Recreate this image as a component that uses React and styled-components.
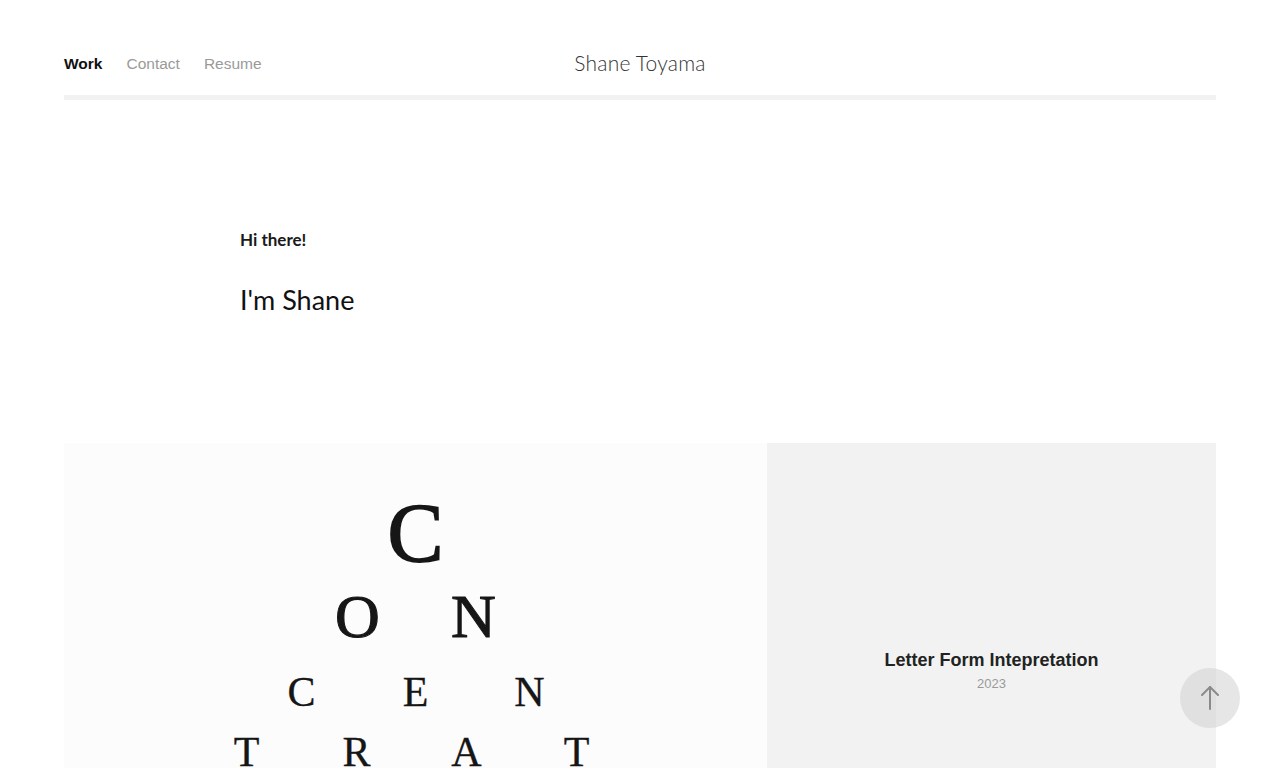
import React from 'react';
import styled, { createGlobalStyle } from 'styled-components';

const GlobalStyle = createGlobalStyle`
  html, body {
    margin: 0;
    padding: 0;
    background: #ffffff;
    overflow: hidden;
  }
  * { box-sizing: border-box; }
`;

const Page = styled.div`
  padding: 0 64px;
  font-family: "Liberation Sans", Arial, sans-serif;
`;

const Header = styled.header`
  padding-top: 49px;
  border-bottom: 5px solid #f2f2f2;
  padding-bottom: 20px;
`;

const HeaderRow = styled.div`
  display: grid;
  grid-template-columns: 1fr auto 1fr;
  align-items: center;
  height: 26px;
`;

const Nav = styled.nav`
  display: flex;
  gap: 24px;
  padding-top: 3px;
`;

const NavLink = styled.a`
  font-size: 15.5px;
  text-decoration: none;
  color: ${(p) => (p.active ? '#111111' : '#9a9a9a')};
  font-weight: ${(p) => (p.active ? 700 : 400)};
`;

const SiteTitle = styled.div`
  font-family: Lato, "Open Sans", sans-serif;
  font-weight: 300;
  font-size: 21px;
  color: #333333;
  letter-spacing: 0.2px;
`;

const Intro = styled.section`
  padding: 129px 0 0 176px;
  height: 343px;
  font-family: Lato, "Open Sans", sans-serif;
`;

const Greeting = styled.p`
  margin: 0;
  font-size: 17px;
  font-weight: 700;
  color: #1a1a1a;
`;

const Name = styled.h1`
  margin: 33px 0 0;
  font-size: 27px;
  font-weight: 400;
  color: #111111;
`;

const Grid = styled.div`
  display: grid;
  grid-template-columns: 703px 1fr;
  height: 454px;
`;

const ImageCard = styled.div`
  background: #fcfcfc;
  display: flex;
  flex-direction: column;
  align-items: center;
  padding-top: 52px;
  font-family: "Liberation Serif", "Times New Roman", serif;
  color: #161616;
`;

const ChartRow = styled.div`
  display: flex;
  justify-content: center;
  height: ${(p) => p.h}px;
  font-size: ${(p) => p.size}px;
  line-height: ${(p) => p.h}px;
  -webkit-text-stroke: ${(p) => p.stroke}px #161616;
  transform: translateX(${(p) => p.shift || 0}px);
`;

const ChartLetter = styled.span`
  width: ${(p) => p.w}px;
  text-align: center;
`;

const InfoCard = styled.div`
  background: #f2f2f2;
  display: flex;
  flex-direction: column;
  align-items: center;
  justify-content: center;
`;

const CardTitle = styled.h3`
  margin: 0;
  font-size: 18px;
  font-weight: 700;
  color: #222222;
`;

const CardYear = styled.div`
  margin-top: 5px;
  font-size: 13px;
  color: #9a9a9a;
`;

const TopButton = styled.button`
  position: fixed;
  left: 1180px;
  top: 668px;
  width: 60px;
  height: 60px;
  border-radius: 50%;
  border: none;
  background: rgba(210, 210, 210, 0.55);
  display: flex;
  align-items: center;
  justify-content: center;
  padding: 0;
`;

const rows = [
  { size: 84, h: 77, w: 116, stroke: 1.6, letters: ['C'] },
  { size: 62, h: 88, w: 116, stroke: 1.1, letters: ['O', 'N'] },
  { size: 42, h: 64, w: 114, stroke: 0.3, letters: ['C', 'E', 'N'] },
  { size: 42, h: 56, w: 110, stroke: 0.3, shift: -4, letters: ['T', 'R', 'A', 'T'] },
];

const App = () => {
  return (
    <Page>
      <GlobalStyle />
      <Header>
        <HeaderRow>
          <Nav>
            <NavLink href="#" active>Work</NavLink>
            <NavLink href="#">Contact</NavLink>
            <NavLink href="#">Resume</NavLink>
          </Nav>
          <SiteTitle>Shane Toyama</SiteTitle>
          <div />
        </HeaderRow>
      </Header>

      <Intro>
        <Greeting>Hi there!</Greeting>
        <Name>I'm Shane</Name>
      </Intro>

      <Grid>
        <ImageCard>
          {rows.map((r, i) => (
            <ChartRow key={i} size={r.size} h={r.h} stroke={r.stroke} shift={r.shift}>
              {r.letters.map((l, j) => (
                <ChartLetter key={j} w={r.w}>{l}</ChartLetter>
              ))}
            </ChartRow>
          ))}
        </ImageCard>
        <InfoCard>
          <CardTitle>Letter Form Intepretation</CardTitle>
          <CardYear>2023</CardYear>
        </InfoCard>
      </Grid>

      <TopButton aria-label="Back to top">
        <svg width="22" height="28" viewBox="0 0 22 28" fill="none" stroke="#8a8a8a" strokeWidth="2" strokeLinecap="round">
          <line x1="11" y1="3" x2="11" y2="25" />
          <polyline points="3,11 11,3 19,11" strokeLinejoin="round" />
        </svg>
      </TopButton>
    </Page>
  );
};

export default App;
